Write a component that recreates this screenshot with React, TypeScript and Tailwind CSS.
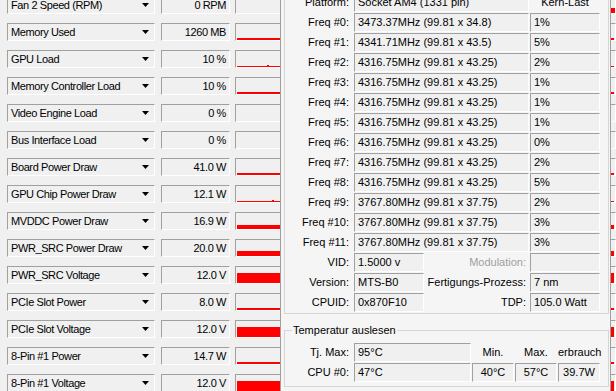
import React from 'react';

type Sensor = {
  label: string;
  value: string;
  bar: number;
  blip?: number;
  tail?: number;
};

const sensors: Sensor[] = [
  { label: 'Fan 2 Speed (RPM)', value: '0 RPM', bar: 0, tail: 5 },
  { label: 'Memory Used', value: '1260 MB', bar: 2 },
  { label: 'GPU Load', value: '10 %', bar: 1, blip: 31 },
  { label: 'Memory Controller Load', value: '10 %', bar: 2 },
  { label: 'Video Engine Load', value: '0 %', bar: 0 },
  { label: 'Bus Interface Load', value: '0 %', bar: 0 },
  { label: 'Board Power Draw', value: '41.0 W', bar: 2 },
  { label: 'GPU Chip Power Draw', value: '12.1 W', bar: 1, blip: 36 },
  { label: 'MVDDC Power Draw', value: '16.9 W', bar: 4 },
  { label: 'PWR_SRC Power Draw', value: '20.0 W', bar: 5 },
  { label: 'PWR_SRC Voltage', value: '12.0 V', bar: 10 },
  { label: 'PCIe Slot Power', value: '8.0 W', bar: 2 },
  { label: 'PCIe Slot Voltage', value: '12.0 V', bar: 10 },
  { label: '8-Pin #1 Power', value: '14.7 W', bar: 2 },
  { label: '8-Pin #1 Voltage', value: '12.0 V', bar: 10 },
];

const freqs = [
  ['3473.37MHz (99.81 x 34.8)', '1%'],
  ['4341.71MHz (99.81 x 43.5)', '5%'],
  ['4316.75MHz (99.81 x 43.25)', '2%'],
  ['4316.75MHz (99.81 x 43.25)', '1%'],
  ['4316.75MHz (99.81 x 43.25)', '1%'],
  ['4316.75MHz (99.81 x 43.25)', '1%'],
  ['4316.75MHz (99.81 x 43.25)', '0%'],
  ['4316.75MHz (99.81 x 43.25)', '2%'],
  ['4316.75MHz (99.81 x 43.25)', '5%'],
  ['3767.80MHz (99.81 x 37.75)', '2%'],
  ['3767.80MHz (99.81 x 37.75)', '3%'],
  ['3767.80MHz (99.81 x 37.75)', '3%'],
];

const sunken = 'border border-t-[#a0a0a0] border-l-[#a0a0a0] border-b-white border-r-white';

const Cell = ({ w, children, center }: { w: string; children?: React.ReactNode; center?: boolean }) => (
  <div className={`${w} h-[19px] shrink-0 flex items-center bg-[#f0f0f0] whitespace-nowrap overflow-hidden ${sunken} ${center ? 'justify-center' : 'pl-[3px]'}`}>
    {children}
  </div>
);

const Label = ({ w, children, muted }: { w: string; children: React.ReactNode; muted?: boolean }) => (
  <div className={`${w} shrink-0 text-right whitespace-nowrap ${muted ? 'text-[#a0a0a0]' : ''}`}>{children}</div>
);

export default function App() {
  return (
    <div className="relative h-[391px] w-[616px] overflow-hidden bg-[#f0f0f0] font-['Liberation_Sans',Arial,sans-serif] text-[11px] leading-[13px] text-black">
      {/* GPU-Z sensor list */}
      <div className="-mt-[4px] flex flex-col gap-[9px] pl-[7px] tracking-[-0.4px]">
        {sensors.map((s) => (
          <div key={s.label} className="flex h-[18px]">
            <div className={`w-[148px] flex items-center justify-between pl-[3px] pr-[5px] ${sunken}`}>
              <span className="whitespace-nowrap">{s.label}</span>
              <svg width="7" height="4" viewBox="0 0 7 4">
                <path d="M0 0h7L3.5 4z" fill="#000" />
              </svg>
            </div>
            <div className={`ml-[6px] w-[69px] flex items-center justify-end pr-[3px] ${sunken}`}>
              {s.value}
            </div>
            <div className={`relative ml-[5px] flex-1 ${sunken}`}>
              {s.bar > 0 && (
                <div className="absolute inset-x-[1px] bottom-0 bg-[#ff0000]" style={{ height: s.bar }} />
              )}
              {s.blip !== undefined && (
                <div className="absolute bottom-[1px] h-[1px] w-[2px] bg-[#ff0000]" style={{ left: s.blip }} />
              )}
              {s.tail !== undefined && (
                <div className="absolute right-0 top-[11px] w-[20px] bg-[#ff0000]" style={{ height: s.tail }} />
              )}
            </div>
          </div>
        ))}
      </div>

      {/* CPU clock window */}
      <div className="absolute left-[280px] top-0 h-[391px] w-[331px] border-x border-[#a0a0a0] bg-[#f5f5f5] pl-[3px] pr-[1px]">
        <div className="-mt-[7px] border-x border-b border-[#d5d5d5] pb-0">
          <div className="flex mb-[1px] h-[19px] items-center">
            <Label w="w-[64px]">Platform:</Label>
            <div className="ml-[5px]">
              <Cell w="w-[175px]">Socket AM4 (1331 pin)</Cell>
            </div>
            <div className="ml-[1px] w-[70px] text-center">Kern-Last</div>
          </div>
          {freqs.map(([f, load], i) => (
            <div key={i} className="flex mb-[1px] items-center">
              <Label w="w-[64px]">{`Freq #${i}:`}</Label>
              <div className="ml-[5px] flex gap-[1px]">
                <Cell w="w-[175px]">{f}</Cell>
                <Cell w="w-[70px]">{load}</Cell>
              </div>
            </div>
          ))}
          {[
            ['VID:', '1.5000 v', 'Modulation:', '', true],
            ['Version:', 'MTS-B0', 'Fertigungs-Prozess:', '7 nm', false],
            ['CPUID:', '0x870F10', 'TDP:', '105.0 Watt', false],
          ].map(([l, v, l2, v2, muted]) => (
            <div key={l as string} className="flex mb-[1px] items-center">
              <Label w="w-[64px]">{l}</Label>
              <div className="ml-[5px]">
                <Cell w="w-[70px]">{v}</Cell>
              </div>
              <Label w="w-[102px]" muted={muted as boolean}>{l2}</Label>
              <div className="ml-[4px]">
                <Cell w="w-[70px]">{v2}</Cell>
              </div>
            </div>
          ))}
        </div>

        <div className="relative mt-[16px] border border-[#d5d5d5] pt-[12px] pb-[3px]">
          <div className="absolute -top-[7px] left-[7px] bg-[#f5f5f5] px-[1px]">Temperatur auslesen</div>
          <div className="flex mb-[1px] items-center">
            <Label w="w-[64px]">Tj. Max:</Label>
            <div className="ml-[5px]">
              <Cell w="w-[117px]">95°C</Cell>
            </div>
            <div className="ml-[1px] w-[42px] text-center">Min.</div>
            <div className="ml-[1px] w-[42px] text-center">Max.</div>
            <div className="ml-[1px] w-[42px] text-center whitespace-nowrap">erbrauch</div>
          </div>
          <div className="flex mb-[1px] items-center">
            <Label w="w-[64px]">CPU #0:</Label>
            <div className="ml-[5px] flex gap-[1px]">
              <Cell w="w-[117px]">47°C</Cell>
              <Cell w="w-[42px]" center>40°C</Cell>
              <Cell w="w-[42px]" center>57°C</Cell>
              <Cell w="w-[42px]" center>39.7W</Cell>
            </div>
          </div>
        </div>
      </div>
    </div>
  );
}
